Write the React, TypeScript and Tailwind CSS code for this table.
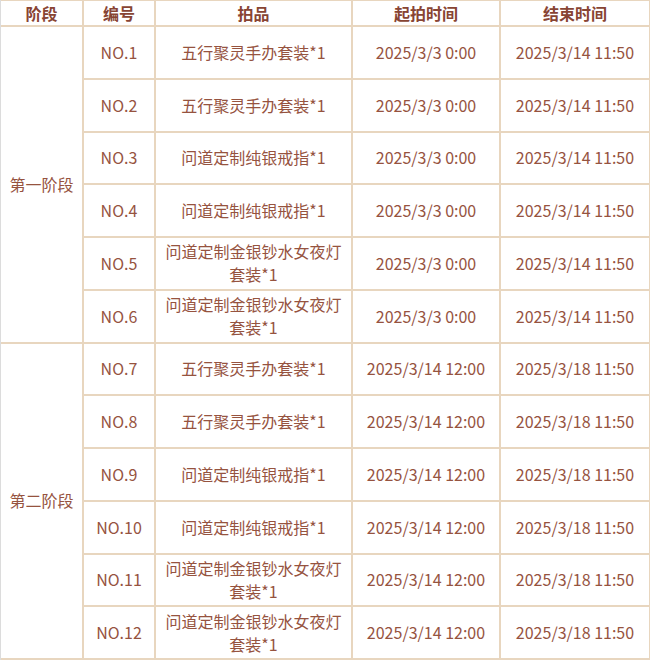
const rows = [
  { no: "NO.1", item: "五行聚灵手办套装*1", start: "2025/3/3 0:00", end: "2025/3/14 11:50" },
  { no: "NO.2", item: "五行聚灵手办套装*1", start: "2025/3/3 0:00", end: "2025/3/14 11:50" },
  { no: "NO.3", item: "问道定制纯银戒指*1", start: "2025/3/3 0:00", end: "2025/3/14 11:50" },
  { no: "NO.4", item: "问道定制纯银戒指*1", start: "2025/3/3 0:00", end: "2025/3/14 11:50" },
  { no: "NO.5", item: "问道定制金银钞水女夜灯套装*1", start: "2025/3/3 0:00", end: "2025/3/14 11:50" },
  { no: "NO.6", item: "问道定制金银钞水女夜灯套装*1", start: "2025/3/3 0:00", end: "2025/3/14 11:50" },
  { no: "NO.7", item: "五行聚灵手办套装*1", start: "2025/3/14 12:00", end: "2025/3/18 11:50" },
  { no: "NO.8", item: "五行聚灵手办套装*1", start: "2025/3/14 12:00", end: "2025/3/18 11:50" },
  { no: "NO.9", item: "问道定制纯银戒指*1", start: "2025/3/14 12:00", end: "2025/3/18 11:50" },
  { no: "NO.10", item: "问道定制纯银戒指*1", start: "2025/3/14 12:00", end: "2025/3/18 11:50" },
  { no: "NO.11", item: "问道定制金银钞水女夜灯套装*1", start: "2025/3/14 12:00", end: "2025/3/18 11:50" },
  { no: "NO.12", item: "问道定制金银钞水女夜灯套装*1", start: "2025/3/14 12:00", end: "2025/3/18 11:50" },
]

const cell = "border-2 border-[#e8d6bf] text-center align-middle"

export default function App() {
  return (
    <div
      className="w-[650px] h-[660px] bg-white overflow-hidden border-l border-[#dcdcdc]"
      style={{ fontFamily: '"Microsoft YaHei", "Noto Sans CJK SC", sans-serif' }}
    >
      <table className="w-[649px] table-fixed border-collapse text-[16px] leading-[23px] text-[#96533f] -mt-[1px]">
        <colgroup>
          <col className="w-[82px]" />
          <col className="w-[72px]" />
          <col className="w-[197px]" />
          <col className="w-[148px]" />
          <col className="w-[150px]" />
        </colgroup>
        <thead>
          <tr className="h-[26px] text-[#884433] font-bold">
            <th className={cell + " border-l-0"}>阶段</th>
            <th className={cell}>编号</th>
            <th className={cell}>拍品</th>
            <th className={cell}>起拍时间</th>
            <th className={cell}>结束时间</th>
          </tr>
        </thead>
        <tbody>
          {rows.map((r, i) => (
            <tr key={r.no} className="h-[52.75px]">
              {i % 6 === 0 && (
                <td rowSpan={6} className={cell + " border-l-0"}>
                  {i === 0 ? "第一阶段" : "第二阶段"}
                </td>
              )}
              <td className={cell}>{r.no}</td>
              <td className={cell + " px-2"}>{r.item}</td>
              <td className={cell}>{r.start}</td>
              <td className={cell}>{r.end}</td>
            </tr>
          ))}
        </tbody>
      </table>
    </div>
  )
}
